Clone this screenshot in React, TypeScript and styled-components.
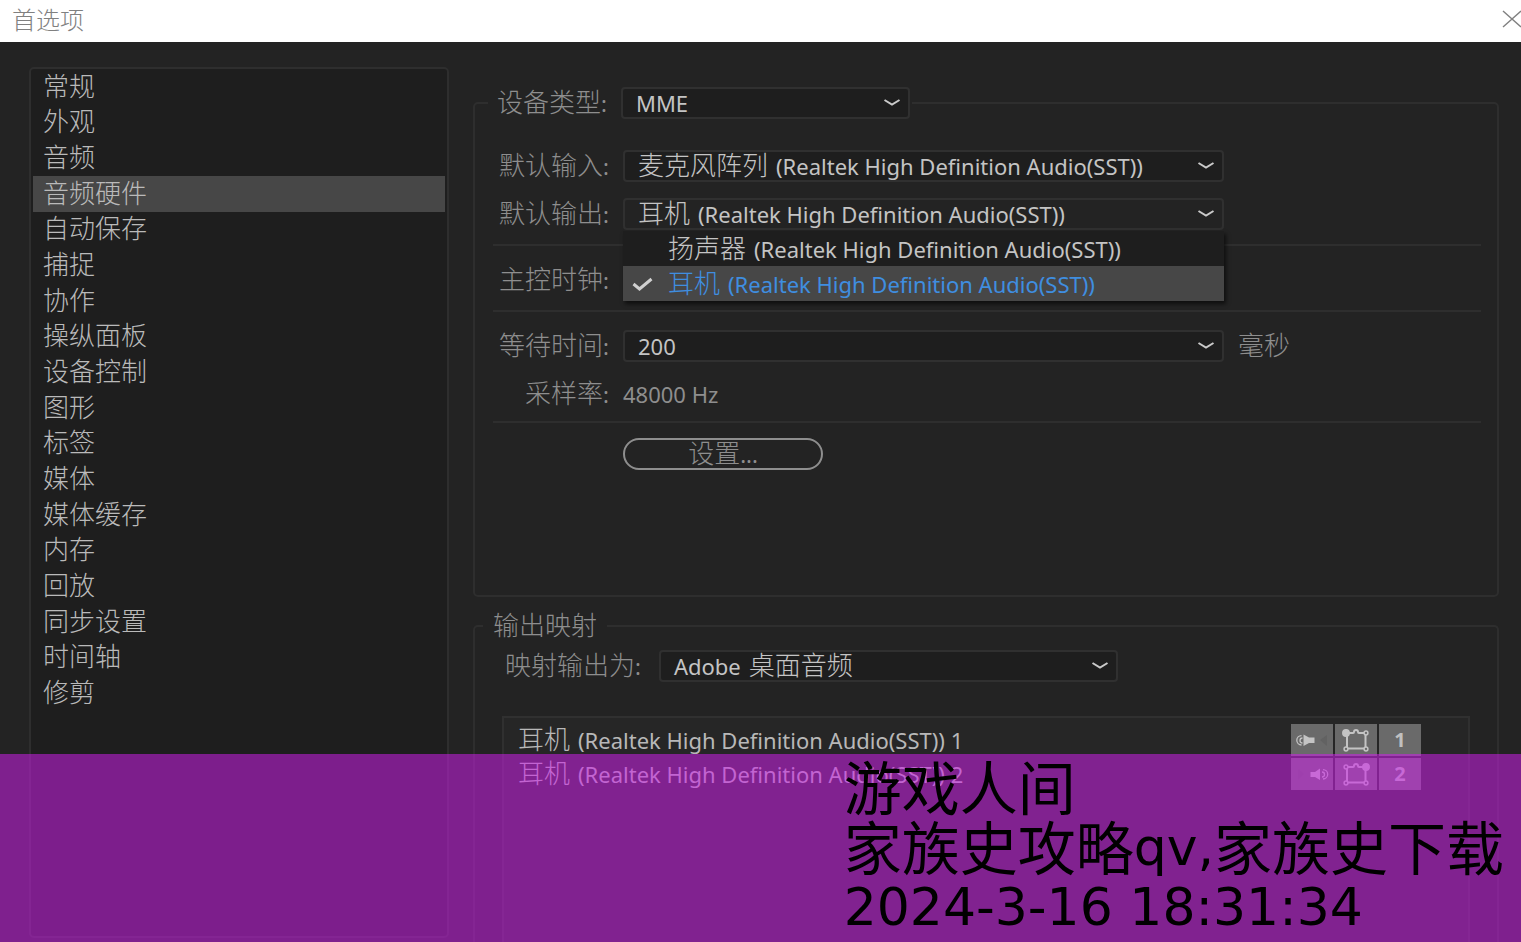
import React, { useState } from "react";
import styled, { createGlobalStyle } from "styled-components";

const GlobalStyle = createGlobalStyle`
  *, *::before, *::after { box-sizing: border-box; }
  body {
    margin: 0;
    background: #232323;
    color: #bababa;
    font-family: "Noto Sans", "Noto Sans CJK SC", sans-serif;
    font-size: 22px;
    line-height: 32px;
  }
  button, select { font: inherit; color: inherit; }
`;

const Window = styled.div`
  display: flex;
  flex-direction: column;
  height: 100vh;
  min-height: 800px;
  overflow: hidden;
`;

const TitleBar = styled.header`
  display: flex;
  justify-content: space-between;
  align-items: center;
  height: 42px;
  padding: 0 0 5px 12px;
  background: #fff;
  color: #808080;
`;

const Title = styled.h1`
  margin: 0;
  font-family: "Noto Sans CJK SC", sans-serif;
  font-size: 24px;
  font-weight: 300;
  line-height: 32px;
`;

const CloseButton = styled.button`
  display: flex;
  padding: 0;
  border: 0;
  background: none;
`;

const Content = styled.div`
  flex: 1;
  min-height: 0;
  display: flex;
  gap: 24px;
  padding: 25px 22px 0 29px;
`;

const Sidebar = styled.nav`
  flex: 0 0 420px;
  margin-bottom: 4px;
  padding: 0 2px;
  border: 2px solid #2e2e2e;
  border-radius: 5px;
  background: #1e1e1e;
`;

const NavList = styled.ul`
  display: grid;
  grid-template-rows: repeat(18, 1fr);
  height: 642px;
  margin: 0;
  padding: 0;
  list-style: none;
`;

const NavItem = styled.button<{ $active?: boolean }>`
  display: flex;
  align-items: center;
  width: 100%;
  height: 100%;
  padding: 0 10px;
  border: 0;
  background: ${(p) => (p.$active ? "#474747" : "transparent")};
`;

const Cjk = styled.span`
  padding-bottom: 4px;
  font-family: "Noto Sans CJK SC", sans-serif;
  font-size: 26px;
  font-weight: 300;
  line-height: 28px;
`;

const Panels = styled.main`
  flex: 1;
  min-width: 0;
  display: flex;
  flex-direction: column;
  gap: 13px;
  padding-top: 20px;
`;

const Group = styled.fieldset`
  flex: 0 0 510px;
  min-width: 0;
  margin: 0;
  padding: 0 16px 0 18px;
  border: 2px solid #2e2e2e;
  border-radius: 5px;
  color: #8e8e8e;
`;

const MappingGroup = styled(Group)`
  flex: 1;
  display: flex;
  flex-direction: column;
  border-bottom: 0;
  border-radius: 5px 5px 0 0;
`;

const DeviceLegend = styled.legend`
  display: flex;
  align-items: center;
  gap: 14px;
  height: 32px;
  margin-left: -5px;
  padding-left: 9px;
`;

const MappingLegend = styled.legend`
  display: flex;
  align-items: center;
  height: 32px;
  margin-left: -10px;
  padding: 0 10px;
`;

const Rows = styled.div`
  display: flex;
  flex-direction: column;
  gap: 16px;
`;

const DeviceRows = styled(Rows)`
  padding: 31px 0 14px;
`;

const LatencyRows = styled(Rows)`
  padding: 18px 0 11px;
`;

const Row = styled.div`
  display: grid;
  grid-template-columns: 116px minmax(0, 601px) auto;
  column-gap: 14px;
  align-items: center;
  height: 32px;
`;

const ClockRow = styled(Row)`
  margin: 18px 0 14px;
`;

const ButtonRow = styled(Row)`
  margin-top: 15px;
`;

const FieldLabel = styled.label`
  display: flex;
  align-items: center;
  justify-self: end;
  white-space: nowrap;
`;

const Rule = styled.hr`
  height: 2px;
  margin: 0;
  border: 0;
  background: #2e2e2e;
`;

const Field = styled.div<{ $width?: number; $raised?: boolean }>`
  position: relative;
  display: flex;
  justify-content: space-between;
  align-items: center;
  width: ${(p) => (p.$width ? `${p.$width}px` : "100%")};
  height: 32px;
  padding: 0 7px 0 13px;
  border: 2px solid #303030;
  border-radius: 4px;
  background: ${(p) => (p.$raised ? "#232323" : "#1e1e1e")};
  color: #c4c4c4;
`;

const Value = styled.span`
  display: flex;
  align-items: center;
  gap: 8px;
  line-height: 30px;
  white-space: nowrap;
`;

const NativeSelect = styled.select`
  position: absolute;
  inset: 0;
  width: 100%;
  height: 100%;
  opacity: 0;
  cursor: pointer;
`;

const Menu = styled.ul`
  position: absolute;
  z-index: 2;
  top: 31px;
  left: -2px;
  right: -2px;
  margin: 0;
  padding: 0;
  list-style: none;
  background: #1e1e1e;
  box-shadow: 2px 3px 4px rgba(0, 0, 0, 0.6);
`;

const MenuItem = styled.li<{ $selected?: boolean }>`
  display: grid;
  grid-template-columns: 36px auto;
  align-items: center;
  height: 35px;
  padding-left: 9px;
  background: ${(p) => (p.$selected ? "#474747" : "transparent")};
  color: ${(p) => (p.$selected ? "#3f8ee0" : "#c4c4c4")};
`;

const SettingsButton = styled.button`
  display: flex;
  align-items: center;
  justify-content: center;
  width: 200px;
  height: 32px;
  padding: 0;
  border: 2px solid #8e8e8e;
  border-radius: 16px;
  background: transparent;
`;

const MappingRow = styled.div`
  display: flex;
  align-items: center;
  gap: 18px;
  padding: 8px 0 0 12px;
`;

const MapPanel = styled.div`
  flex: 1;
  margin: 34px 11px 0 9px;
  padding-top: 5px;
  border: 2px solid #303030;
  border-bottom: 0;
  background: #262626;
`;

const MapTable = styled.table`
  width: 100%;
  table-layout: fixed;
  border-collapse: collapse;
  color: #b8b8b8;

  td, th { width: 44px; height: 34px; padding: 0; font-weight: 400; text-align: left; }
  th { width: auto; padding-left: 14px; }
  td:last-child { width: 45px; }
`;

const Cell = styled.div`
  display: flex;
  align-items: center;
  justify-content: center;
  width: 42px;
  height: 32px;
  background: #6a6a6a;
  color: #c0c0c0;
  font-size: 20px;
  font-weight: 700;
`;

const Banner = styled.aside`
  position: fixed;
  z-index: 5;
  right: 0;
  bottom: 0;
  left: 0;
  display: flex;
  justify-content: flex-end;
  height: 188px;
  padding: 3px 17px 0 0;
  background: rgba(204, 31, 231, 0.55);
  color: #000;
`;

const BannerText = styled.div`
  font-family: "DejaVu Sans", "Noto Sans CJK SC", sans-serif;
  font-size: 52px;
  line-height: 60px;
  white-space: nowrap;

  p {
    display: flex;
    align-items: center;
    height: 60px;
    margin: 0;
  }
`;

const BannerCjk = styled.span`
  padding-bottom: 4px;
  font-family: "Noto Sans CJK SC", sans-serif;
  font-size: 58px;
  line-height: 56px;
`;

const Chevron = () => (
  <svg width="18" height="10" viewBox="0 0 18 10" fill="none" aria-hidden="true">
    <path d="M1.5 2 9 6.6 16.5 2" stroke="#cacaca" strokeWidth="2" />
  </svg>
);

const CheckMark = () => (
  <svg width="21" height="14" viewBox="0 0 21 14" fill="none" aria-hidden="true">
    <path d="M1.5 7 7.5 12 19.5 2" stroke="#d0d0d0" strokeWidth="3" />
  </svg>
);

const SpeakerIcon = ({ side }: { side: "left" | "right" }) => (
  <svg width="42" height="32" viewBox="0 0 42 32" fill="none" aria-hidden="true">
    {side === "left" ? (
      <>
        <path d="M12.5 10.5 18 13.5H23.5V19H18L12.5 22Z" fill="#c4c4c4" />
        <path d="M10.5 11.6A4.7 4.7 0 0 0 10.5 21M11.5 14A2.5 2.5 0 0 0 11.5 19" stroke="#c4c4c4" strokeWidth="1.3" />
        <path d="M29 16 36 11V22Z" fill="#626262" />
      </>
    ) : (
      <>
        <path d="M19.5 14H24L29 10.5V22L24 19H19.5Z" fill="#c4c4c4" />
        <path d="M32 11.6A4.7 4.7 0 0 1 32 21M31 14A2.5 2.5 0 0 1 31 19" stroke="#c4c4c4" strokeWidth="1.3" />
        <path d="M13 16 7 11V22Z" fill="#676767" />
      </>
    )}
  </svg>
);

const SurroundIcon = ({ side }: { side: "left" | "right" }) => (
  <svg width="42" height="32" viewBox="0 0 42 32" fill="none" stroke="#c4c4c4" strokeWidth="1.5" aria-hidden="true">
    <path
      d="M12.5 9H18Q19 9 19 8 19 6 21 6 23 6 23 8 23 9 24 9H29.5M12 10.5V23.5M30.5 10.5V23.5M12.5 24.5H29.5"
      strokeWidth="2"
    />
    <circle cx="11" cy="9" r="1.9" fill="#6a6a6a" />
    <circle cx="31" cy="9" r="1.9" fill="#6a6a6a" />
    <circle cx="11" cy="25" r="1.9" fill="#6a6a6a" />
    <circle cx="31" cy="25" r="1.9" fill="#6a6a6a" />
    <circle cx={side === "left" ? 11 : 31} cy="9" r="3.2" fill="#c4c4c4" />
  </svg>
);

type Label = { cjk?: string; latin?: string; latinFirst?: boolean };

const MixedText = ({ cjk, latin, latinFirst }: Label) => (
  <Value>
    {latinFirst && latin}
    {cjk && <Cjk>{cjk}</Cjk>}
    {!latinFirst && latin && <span>{latin}</span>}
  </Value>
);

const asText = ({ cjk, latin, latinFirst }: Label) =>
  (latinFirst ? [latin, cjk] : [cjk, latin]).filter(Boolean).join(" ");

type DropdownProps = {
  id: string;
  value: Label;
  options?: Label[];
  width?: number;
  open?: boolean;
};

const Dropdown = ({ id, value, options = [value], width, open }: DropdownProps) => {
  const [current, setCurrent] = useState(options.indexOf(value));
  return (
    <Field $width={width} $raised={open}>
      <MixedText {...options[current]} />
      <Chevron />
      <NativeSelect id={id} value={current} onChange={(e) => setCurrent(Number(e.target.value))}>
        {options.map((o, i) => (
          <option key={i} value={i}>{asText(o)}</option>
        ))}
      </NativeSelect>
      {open && (
        <Menu role="listbox">
          {options.map((o, i) => (
            <MenuItem
              key={i}
              role="option"
              aria-selected={i === current}
              $selected={i === current}
              onClick={() => setCurrent(i)}
            >
              <Value>{i === current && <CheckMark />}</Value>
              <MixedText {...o} />
            </MenuItem>
          ))}
        </Menu>
      )}
    </Field>
  );
};

const realtek = "(Realtek High Definition Audio(SST))";
const microphone: Label = { cjk: "麦克风阵列", latin: realtek };
const speaker: Label = { cjk: "扬声器", latin: realtek };
const headphones: Label = { cjk: "耳机", latin: realtek };
const outputs = [speaker, headphones];
const mme: Label = { latin: "MME" };
const latency: Label = { latin: "200" };
const noClock: Label = {};
const desktopAudio: Label = { cjk: "桌面音频", latin: "Adobe", latinFirst: true };

const sections = [
  "常规", "外观", "音频", "音频硬件", "自动保存", "捕捉", "协作", "操纵面板", "设备控制",
  "图形", "标签", "媒体", "媒体缓存", "内存", "回放", "同步设置", "时间轴", "修剪",
];

export default function App() {
  const [section, setSection] = useState("音频硬件");
  return (
    <Window>
      <GlobalStyle />
      <TitleBar>
        <Title>首选项</Title>
        <CloseButton aria-label="关闭">
          <svg width="19" height="18" viewBox="0 0 19 18" fill="none" stroke="#808080" strokeWidth="1.4">
            <path d="M1 1 19 17M19 1 1 17" />
          </svg>
        </CloseButton>
      </TitleBar>
      <Content>
        <Sidebar>
          <NavList>
            {sections.map((s) => (
              <li key={s}>
                <NavItem $active={s === section} onClick={() => setSection(s)}>
                  <Cjk>{s}</Cjk>
                </NavItem>
              </li>
            ))}
          </NavList>
        </Sidebar>
        <Panels>
          <Group>
            <DeviceLegend>
              <FieldLabel htmlFor="device"><Cjk>设备类型</Cjk>:</FieldLabel>
              <Dropdown id="device" value={mme} width={289} />
            </DeviceLegend>
            <DeviceRows>
              <Row>
                <FieldLabel htmlFor="input"><Cjk>默认输入</Cjk>:</FieldLabel>
                <Dropdown id="input" value={microphone} />
              </Row>
              <Row>
                <FieldLabel htmlFor="output"><Cjk>默认输出</Cjk>:</FieldLabel>
                <Dropdown id="output" value={headphones} options={outputs} open />
              </Row>
            </DeviceRows>
            <Rule />
            <ClockRow>
              <FieldLabel htmlFor="clock"><Cjk>主控时钟</Cjk>:</FieldLabel>
              <Dropdown id="clock" value={noClock} />
            </ClockRow>
            <Rule />
            <LatencyRows>
              <Row>
                <FieldLabel htmlFor="latency"><Cjk>等待时间</Cjk>:</FieldLabel>
                <Dropdown id="latency" value={latency} />
                <Cjk>毫秒</Cjk>
              </Row>
              <Row>
                <FieldLabel as="span"><Cjk>采样率</Cjk>:</FieldLabel>
                <span>48000 Hz</span>
              </Row>
            </LatencyRows>
            <Rule />
            <ButtonRow>
              <span />
              <SettingsButton><Cjk>设置</Cjk>...</SettingsButton>
            </ButtonRow>
          </Group>
          <MappingGroup>
            <MappingLegend><Cjk>输出映射</Cjk></MappingLegend>
            <MappingRow>
              <FieldLabel htmlFor="mapping"><Cjk>映射输出为</Cjk>:</FieldLabel>
              <Dropdown id="mapping" value={desktopAudio} width={459} />
            </MappingRow>
            <MapPanel>
              <MapTable>
                <tbody>
                  {(["left", "right"] as const).map((side, i) => (
                    <tr key={side}>
                      <th scope="row">
                        <MixedText cjk="耳机" latin={`${realtek} ${i + 1}`} />
                      </th>
                      <td><Cell><SpeakerIcon side={side} /></Cell></td>
                      <td><Cell><SurroundIcon side={side} /></Cell></td>
                      <td><Cell>{i + 1}</Cell></td>
                      <td />
                    </tr>
                  ))}
                </tbody>
              </MapTable>
            </MapPanel>
          </MappingGroup>
        </Panels>
      </Content>
      <Banner>
        <BannerText>
          <p><BannerCjk>游戏人间</BannerCjk></p>
          <p><BannerCjk>家族史攻略</BannerCjk>qv,<BannerCjk>家族史下载</BannerCjk></p>
          <p>2024-3-16 18:31:34</p>
        </BannerText>
      </Banner>
    </Window>
  );
}
